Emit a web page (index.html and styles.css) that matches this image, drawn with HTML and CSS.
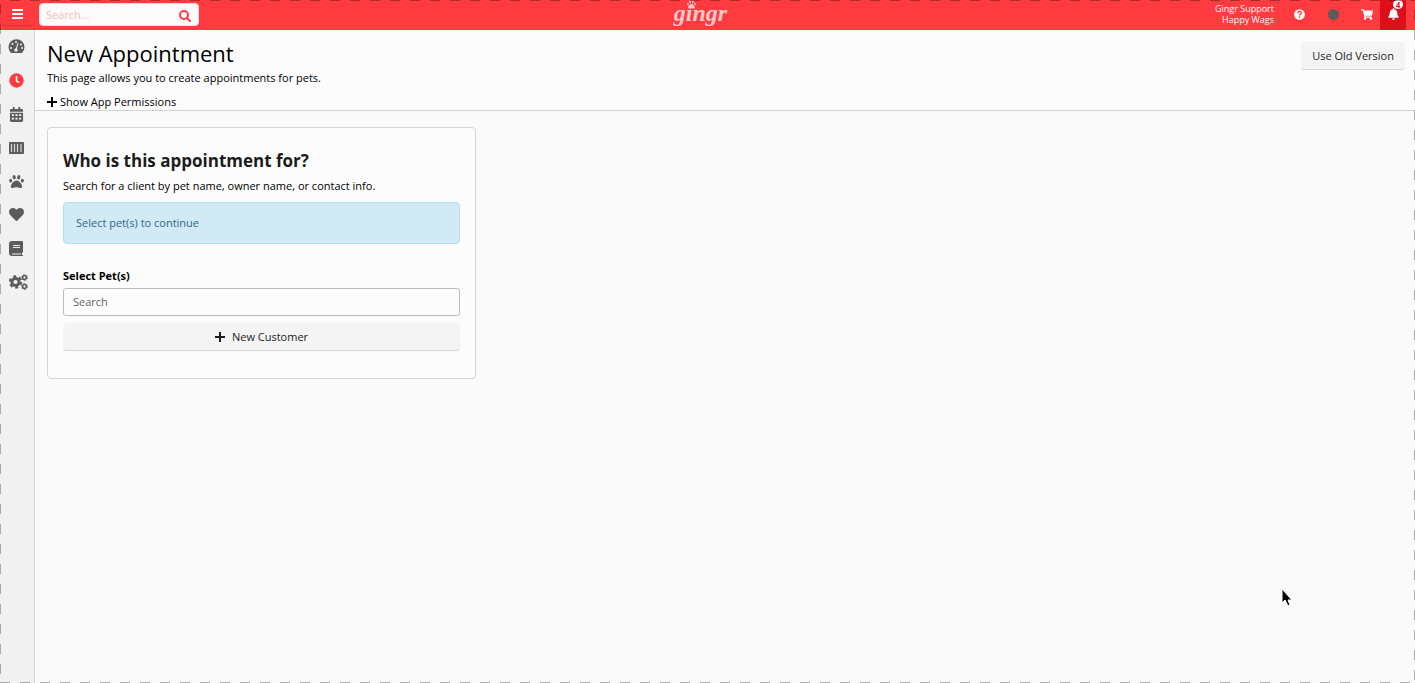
FILE: index.html
```html
<!DOCTYPE html>
<html lang="en">
<head>
  <meta charset="UTF-8">
  <title>New Appointment</title>
  <link rel="stylesheet" href="styles.css">
</head>
<body>
  <header class="topbar">
    <div class="topbar-left">
      <button class="menu-btn" aria-label="Menu">
        <svg width="11" height="10" viewBox="0 0 11 10"><path d="M0 1h11M0 5h11M0 9h11" stroke="currentColor" stroke-width="2"/></svg>
      </button>
      <form class="search">
        <input type="search" placeholder="Search..." aria-label="Search">
        <button type="button" aria-label="Go">
          <svg width="12" height="12" viewBox="0 0 12 12" fill="none" stroke="currentColor" stroke-width="2"><circle cx="5" cy="5" r="4"/><path d="M8 8l3 3" stroke-linecap="round"/></svg>
        </button>
      </form>
    </div>
    <a class="logo" href="#">
      <svg class="logo-paw" width="9" height="9" viewBox="0 0 512 512" fill="currentColor"><use href="#paw"/></svg>
      <span>gingr</span>
    </a>
    <div class="topbar-right">
      <div class="account"><div>Gingr Support</div><div>Happy Wags</div></div>
      <a class="tool" href="#" aria-label="Help">
        <svg width="11" height="11" viewBox="0 0 512 512"><circle cx="256" cy="256" r="250" fill="currentColor"/><path d="M176 195c10-120 170-105 165-10-3 60-83 60-83 120" fill="none" stroke="#ff3b40" stroke-width="64"/><circle cx="258" cy="375" r="42" fill="#ff3b40"/></svg>
      </a>
      <a class="tool" href="#" aria-label="Status"><span class="status"></span></a>
      <a class="tool" href="#" aria-label="Cart">
        <svg width="12" height="11" viewBox="0 0 576 512" fill="currentColor"><path d="M528 301l47-208c4-15-8-29-23-29H159l-9-45C148 8 138 0 127 0H24C11 0 0 11 0 24v16c0 13 11 24 24 24h70l70 343a56 56 0 1 0 67 9h210a56 56 0 1 0 64-11l5-25c4-15-8-29-23-29H218l-7-32h294c11 0 21-8 23-18z"/></svg>
      </a>
      <a class="tool bell" href="#" aria-label="Notifications">
        <svg width="11" height="12" viewBox="0 0 448 512" fill="currentColor"><path d="M224 512c35 0 64-29 64-64H160c0 35 29 64 64 64zm215-150c-19-21-55-52-55-154 0-78-55-140-128-155V32a32 32 0 1 0-64 0v21C119 68 64 130 64 208c0 102-36 133-55 154-6 6-9 14-9 22 0 16 13 32 32 32h384c19 0 32-16 32-32 0-8-3-16-9-22z"/></svg>
        <span class="badge">4</span>
      </a>
    </div>
  </header>

  <div class="shell">
    <nav class="sidebar">
      <div class="sidebar-links">
        <a href="#" aria-label="Dashboard">
          <svg width="17" height="17" viewBox="0 0 17 17"><path d="M3 15a8 8 0 1 1 11 0z" fill="currentColor"/><g fill="#f1f1f1"><circle cx="3" cy="10" r="1"/><circle cx="4.500" cy="6" r="1"/><circle cx="8" cy="4" r="1"/><circle cx="13" cy="6.500" r="1"/><circle cx="14" cy="10" r="1"/><circle cx="8" cy="12" r="1.700"/></g><path d="M8 12l2-7" stroke="#f1f1f1"/></svg>
        </a>
        <a class="active" href="#" aria-label="Appointments">
          <svg width="15" height="15" viewBox="0 0 15 15"><circle cx="7.500" cy="7.500" r="7.200" fill="currentColor"/><path d="M7.500 3v5l2.500 1.500" fill="none" stroke="#fff" stroke-width="1.500"/></svg>
        </a>
        <a href="#" aria-label="Calendar">
          <svg width="15" height="15" viewBox="0 0 448 512"><path d="M0 464c0 27 21 48 48 48h352c27 0 48-21 48-48V192H0zM400 64h-48V12c0-7-5-12-12-12h-40c-7 0-12 5-12 12v52H160V12c0-7-5-12-12-12h-40c-7 0-12 5-12 12v52H48C21 64 0 85 0 112v48h448v-48c0-27-21-48-48-48z" fill="currentColor"/><path d="M64 245h75v65H64zM187 245h75v65h-75zM310 245h75v65h-75zM64 365h75v65H64zM187 365h75v65h-75zM310 365h75v65h-75z" fill="#f1f1f1"/></svg>
        </a>
        <a href="#" aria-label="Barcode">
          <svg width="15" height="12" viewBox="0 0 15 12"><rect width="15" height="12" rx="1" fill="currentColor"/><path d="M2.500 2v8M5.500 2v8M8.500 2v8M12 2v8" stroke="#d5d5d5" stroke-width="1.200"/></svg>
        </a>
        <a href="#" aria-label="Pets">
          <svg width="15" height="15" viewBox="0 0 512 512" fill="currentColor"><g id="paw"><path d="M256 224c-79 0-192 122-192 200 0 35 27 56 72 56 49 0 81-25 120-25 40 0 72 25 120 25 45 0 72-21 72-56 0-78-113-200-192-200z"/><ellipse cx="57" cy="228" rx="50" ry="62" transform="rotate(-18 57 228)"/><ellipse cx="455" cy="228" rx="50" ry="62" transform="rotate(18 455 228)"/><ellipse cx="178" cy="108" rx="54" ry="76" transform="rotate(-10 178 108)"/><ellipse cx="334" cy="108" rx="54" ry="76" transform="rotate(10 334 108)"/></g></svg>
        </a>
        <a href="#" aria-label="Favorites">
          <svg width="15" height="15" viewBox="0 0 512 512" fill="currentColor"><path d="M462 62c-55-46-136-38-187 14l-19 21-20-21C186 24 104 16 50 62c-63 54-66 150-10 208l193 200c13 13 33 13 46 0l193-200c56-58 53-154-10-208z"/></svg>
        </a>
        <a href="#" aria-label="Reports">
          <svg width="14" height="15" viewBox="0 0 14 15"><path d="M3 0h10q1 0 1 1v10l-1 1v2h1v1H3q-3 0-3-3V3q0-3 3-3z" fill="currentColor"/><path d="M4 4.500h7M4 6.500h7M3 13h9" stroke="#eee"/></svg>
        </a>
        <a class="wide" href="#" aria-label="Settings">
          <svg width="19" height="16" viewBox="0 0 19 16" fill="none" stroke="currentColor"><circle cx="6.500" cy="8" r="3.600" stroke-width="3"/><circle cx="6.500" cy="8" r="5.500" stroke-width="2.600" stroke-dasharray="2.900 2.860"/><g stroke-width="1.500"><circle cx="15.500" cy="3.500" r="1.900"/><circle cx="15.500" cy="12.500" r="1.900"/></g><g stroke-width="1"><circle cx="15.500" cy="3.500" r="2.900" stroke-dasharray="1.500 1.540"/><circle cx="15.500" cy="12.500" r="2.900" stroke-dasharray="1.500 1.540"/></g></svg>
        </a>
      </div>
    </nav>

    <main class="main">
      <div class="page-head">
        <div>
          <h1>New Appointment</h1>
          <p>This page allows you to create appointments for pets.</p>
          <a class="permissions" href="#">
            <svg width="10" height="10" viewBox="0 0 10 10"><path d="M5 0v10M0 5h10" stroke="currentColor" stroke-width="2"/></svg>
            Show App Permissions
          </a>
        </div>
        <button class="btn">Use Old Version</button>
      </div>

      <section class="card">
        <h2>Who is this appointment for?</h2>
        <p>Search for a client by pet name, owner name, or contact info.</p>
        <div class="alert">Select pet(s) to continue</div>
        <label for="pets">Select Pet(s)</label>
        <input type="text" id="pets" class="field" placeholder="Search">
        <button class="btn btn-block">
          <svg width="10" height="10" viewBox="0 0 10 10"><path d="M5 0v10M0 5h10" stroke="currentColor" stroke-width="2"/></svg>
          New Customer
        </button>
      </section>
    </main>
  </div>

  <div class="frame"></div>
  <svg class="cursor" width="12" height="19" viewBox="0 0 12 19"><path d="M1 1v14l3-3 3 6 2-1-2-5h4z" fill="#000" stroke="#fff" stroke-width="1"/></svg>
</body>
</html>
```

FILE: styles.css
```css
* {
  box-sizing: border-box;
}

body {
  margin: 0;
  min-height: 100vh;
  display: flex;
  flex-direction: column;
  background: #fafafa;
  color: #000;
  font-family: "Open Sans", sans-serif;
  font-size: 11px;
  line-height: 16px;
}

a {
  color: inherit;
  text-decoration: none;
}

button,
input {
  font: inherit;
}

svg {
  display: block;
}

h1,
h2,
p {
  margin: 0;
}

/* top bar */
.topbar {
  display: grid;
  grid-template-columns: 1fr auto 1fr;
  height: 30px;
  background: #ff3b40;
  color: #fff;
}

.topbar-left {
  display: flex;
  align-items: flex-start;
  gap: 7px;
  padding: 3px 0 0 3px;
}

.menu-btn {
  display: flex;
  align-items: center;
  justify-content: center;
  width: 29px;
  height: 22px;
  padding: 0;
  border: 0;
  border-radius: 3px;
  background: #ff3b40;
  color: #fff;
  box-shadow: 0 1px 1px #e0282f;
}

.search {
  display: flex;
  align-items: center;
  width: 160px;
  height: 23px;
  padding: 0 7px 0 6px;
  border: 1px solid #ffd5d6;
  border-radius: 4px;
  background: #fbfbfb;
}

.search input {
  flex: 1;
  min-width: 0;
  padding: 0;
  border: 0;
  outline: 0;
  background: none;
}

.search input::placeholder {
  color: #ffb9ba;
}

.search button {
  padding: 2px 0 0;
  border: 0;
  background: none;
  color: #ff3b40;
}

.logo {
  position: relative;
  margin-right: 14px;
  color: #ffc9ca;
  font: italic bold 24px/26px "Liberation Serif", serif;
}

.logo-paw {
  position: absolute;
  top: 0;
  left: 13px;
}

.topbar-right {
  display: flex;
  justify-content: flex-end;
  padding-right: 9px;
}

.account {
  margin-right: 12px;
  padding-top: 3px;
  font-size: 9px;
  line-height: 11px;
  text-align: right;
}

.tool {
  display: flex;
  align-items: center;
  justify-content: center;
  width: 26px;
  height: 28px;
}

.tool + .tool {
  margin-left: 8px;
}

.status {
  width: 11px;
  height: 11px;
  border-radius: 50%;
  background: #5c5c5c;
}

.tool.bell {
  position: relative;
  height: 30px;
  margin-left: 0;
  padding-bottom: 2px;
  background: #dc0f1b;
}

.badge {
  position: absolute;
  top: 0;
  right: 3px;
  width: 10px;
  height: 9px;
  border-radius: 50%;
  background: #fff;
  color: #dc0f1b;
  font-size: 8px;
  font-weight: bold;
  line-height: 9px;
  text-align: center;
}

/* layout */
.shell {
  flex: 1;
  display: flex;
}

.sidebar {
  width: 35px;
  border-right: 1px solid #d4d4d4;
  background: #f1f1f1;
  color: #5c5c5c;
}

.sidebar-links {
  display: grid;
  grid-template-rows: repeat(8, 1fr);
  height: 269px;
}

.sidebar a {
  display: flex;
  align-items: center;
  justify-content: center;
  width: 32px;
}

.sidebar a.wide {
  width: 36px;
}

.sidebar a.active {
  color: #ff3b40;
}

.main {
  flex: 1;
}

.page-head {
  display: flex;
  align-items: flex-start;
  justify-content: space-between;
  height: 81px;
  padding: 12px 10px 0 12px;
  border-bottom: 1px solid #d4d4d4;
  background: #fcfcfc;
}

h1 {
  font-size: 22px;
  font-weight: normal;
  line-height: 22px;
}

.page-head p,
.card p {
  margin: 6px 0 8px;
}

.permissions {
  display: flex;
  align-items: center;
  gap: 3px;
}

.btn {
  height: 28px;
  padding: 0 11px;
  border: 0;
  border-bottom: 1px solid #d4d4d4;
  border-radius: 4px;
  background: #f4f4f4;
  color: #1c1c1c;
}

/* appointment card */
.card {
  width: 429px;
  max-width: 100%;
  margin: 16px 12px;
  padding: 22px 15px 27px;
  border: 1px solid #d4d4d4;
  border-radius: 4px;
  background: #fcfcfc;
}

h2 {
  color: #1c1c1c;
  font-size: 17px;
  line-height: 22px;
}

.alert {
  padding: 12px;
  border: 1px solid #b2e0ee;
  border-radius: 4px;
  background: #d2e9f6;
  color: #2d6987;
}

.card label {
  display: block;
  margin: 24px 0 4px;
  font-weight: bold;
}

.field {
  display: block;
  width: 100%;
  height: 28px;
  padding: 0 9px 2px;
  border: 1px solid #bbb;
  border-radius: 3px;
  background: #fcfcfc;
}

.field::placeholder {
  color: #666;
}

.btn-block {
  display: flex;
  align-items: center;
  justify-content: center;
  gap: 7px;
  width: 100%;
  margin-top: 7px;
}

/* dashed outline round the whole window */
.frame {
  position: fixed;
  inset: 0;
  pointer-events: none;
  background:
    repeating-linear-gradient(90deg, transparent 0 10px, rgba(0, 0, 0, 0.3) 10px 20px) top / 100% 1px no-repeat,
    repeating-linear-gradient(90deg, rgba(0, 0, 0, 0.3) 0 10px, transparent 10px 20px) bottom / 100% 1px no-repeat,
    repeating-linear-gradient(transparent 0 4px, rgba(0, 0, 0, 0.3) 4px 14px, transparent 14px 20px) left / 1px 100% no-repeat,
    repeating-linear-gradient(transparent 0 10px, rgba(0, 0, 0, 0.3) 10px 20px) right / 1px 100% no-repeat;
}

.cursor {
  position: fixed;
  left: 1281px;
  top: 588px;
}
```
